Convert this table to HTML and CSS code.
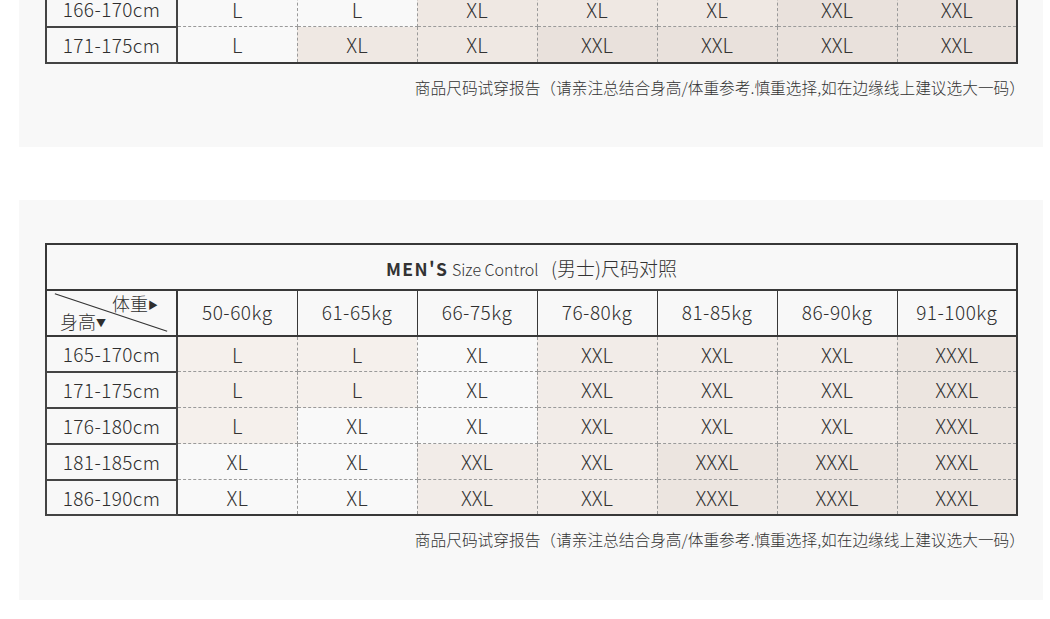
FILE: index.html
```html
<!DOCTYPE html>
<html lang="zh-CN">
<head>
<meta charset="utf-8">
<title>尺码对照</title>
<link rel="stylesheet" href="styles.css">
</head>
<body>
<div class="page">
  <section class="panel panel-cut">
    <table class="size-table">
      <colgroup><col class="col-first"><col><col><col><col><col><col><col></colgroup>
      <tbody>
        <tr>
          <th class="rowhead">166-170cm</th>
          <td class="c0">L</td><td class="c0">L</td><td class="t2">XL</td><td class="t2">XL</td><td class="t2">XL</td><td class="t3">XXL</td><td class="t3">XXL</td>
        </tr>
        <tr>
          <th class="rowhead">171-175cm</th>
          <td class="c0">L</td><td class="t2">XL</td><td class="t2">XL</td><td class="t3">XXL</td><td class="t3">XXL</td><td class="t3">XXL</td><td class="t3">XXL</td>
        </tr>
      </tbody>
    </table>
    <p class="note">商品尺码试穿报告（请亲注总结合身高/体重参考.慎重选择,如在边缘线上建议选大一码）</p>
  </section>

  <section class="panel">
    <table class="size-table">
      <colgroup><col class="col-first"><col><col><col><col><col><col><col></colgroup>
      <thead>
        <tr>
          <th class="title" colspan="8"><span class="t-men">MEN'S</span> <span class="t-size">Size Control</span> <span class="t-cn">(男士)尺码对照</span></th>
        </tr>
        <tr class="head-row">
          <th class="corner">
            <svg class="diag" viewBox="0 0 131 47" preserveAspectRatio="none" aria-hidden="true"><line x1="8" y1="3" x2="122" y2="43" stroke="#333" stroke-width="1.2"/></svg>
            <span class="corner-w">体重<span class="tri">▶</span></span>
            <span class="corner-h">身高<span class="tri">▼</span></span>
          </th>
          <th>50-60kg</th><th>61-65kg</th><th>66-75kg</th><th>76-80kg</th><th>81-85kg</th><th>86-90kg</th><th>91-100kg</th>
        </tr>
      </thead>
      <tbody>
        <tr>
          <th class="rowhead">165-170cm</th>
          <td class="c1">L</td><td class="c1">L</td><td class="c0">XL</td><td class="c2">XXL</td><td class="c2">XXL</td><td class="c2">XXL</td><td class="c3">XXXL</td>
        </tr>
        <tr>
          <th class="rowhead">171-175cm</th>
          <td class="c1">L</td><td class="c1">L</td><td class="c0">XL</td><td class="c2">XXL</td><td class="c2">XXL</td><td class="c2">XXL</td><td class="c3">XXXL</td>
        </tr>
        <tr>
          <th class="rowhead">176-180cm</th>
          <td class="c1">L</td><td class="c0">XL</td><td class="c0">XL</td><td class="c2">XXL</td><td class="c2">XXL</td><td class="c2">XXL</td><td class="c3">XXXL</td>
        </tr>
        <tr>
          <th class="rowhead">181-185cm</th>
          <td class="c0">XL</td><td class="c0">XL</td><td class="c2">XXL</td><td class="c2">XXL</td><td class="c3">XXXL</td><td class="c3">XXXL</td><td class="c3">XXXL</td>
        </tr>
        <tr>
          <th class="rowhead">186-190cm</th>
          <td class="c0">XL</td><td class="c0">XL</td><td class="c2">XXL</td><td class="c2">XXL</td><td class="c3">XXXL</td><td class="c3">XXXL</td><td class="c3">XXXL</td>
        </tr>
      </tbody>
    </table>
    <p class="note">商品尺码试穿报告（请亲注总结合身高/体重参考.慎重选择,如在边缘线上建议选大一码）</p>
  </section>
</div>
</body>
</html>
```

FILE: styles.css
```css
* { box-sizing: border-box; }

html, body {
  margin: 0;
  padding: 0;
  background: #ffffff;
}

body {
  font-family: "Noto Sans CJK SC", "Noto Sans", sans-serif;
  color: #333333;
  overflow: hidden;
}

.page {
  width: 1050px;
  display: flex;
  flex-direction: column;
  gap: 53px;
}

.panel {
  margin-left: 19px;
  width: 1024px;
  background: #f8f8f8;
  padding: 43px 25px 0 26px;
  height: 400px;
}

.panel-cut {
  margin-top: -10px;
  padding-top: 0;
  height: 157px;
}

.size-table {
  width: 973px;
  table-layout: fixed;
  border-collapse: collapse;
  border: 2px solid #383838;
}

.col-first { width: 131px; }

.size-table th,
.size-table td {
  padding: 0;
  text-align: center;
  vertical-align: middle;
}

.size-table td {
  height: 35.9px;
  font-size: 20px;
  font-weight: 300;
  color: #333;
  border-right: 1px dashed #9a9a9a;
  border-bottom: 1px dashed #9a9a9a;
  padding-top: 1px;
  line-height: 1;
}

.size-table .rowhead {
  height: 35.9px;
  font-size: 19px;
  font-weight: 300;
  color: #2e2e2e;
  border: 2px solid #444;
  letter-spacing: 0.4px;
  line-height: 1;
}

.title {
  height: 46px;
  border-bottom: 2px solid #383838;
  font-weight: 400;
  padding-left: 0 !important;
}

.t-men {
  font-size: 17.5px;
  font-weight: 700;
  letter-spacing: 1.4px;
}

.t-size {
  font-size: 16px;
  font-weight: 300;
  margin-right: 9px;
}

.t-cn {
  font-size: 19px;
  font-weight: 300;
}

.head-row th {
  height: 46px;
  font-size: 19px;
  font-weight: 300;
  color: #2e2e2e;
  letter-spacing: 0.5px;
  padding-bottom: 3px;
  border-right: 1px solid #383838;
  border-bottom: 2px solid #383838;
}

.head-row th.corner {
  position: relative;
  border-right: 2px solid #383838;
  font-size: 18px;
  letter-spacing: 0;
  padding-bottom: 0;
}

.diag {
  position: absolute;
  left: 0;
  top: 0;
  width: 100%;
  height: 100%;
}

.corner-w {
  position: absolute;
  right: 18px;
  top: 1px;
  line-height: 22px;
}

.corner-h {
  position: absolute;
  left: 13px;
  bottom: 1px;
  line-height: 22px;
}

.tri {
  font-size: 10px;
  vertical-align: 2px;
}

.c0 { background: #f9f9f9; }
.c1 { background: #f5f0ec; }
.c2 { background: #f2ece8; }
.c3 { background: #ece5e0; }
.t2 { background: #efe8e3; }
.t3 { background: #e9e1dc; }

.note {
  margin: 14px -7px 0 0;
  text-align: right;
  font-size: 15.7px;
  font-weight: 300;
  color: #333;
  line-height: 20px;
}
```
